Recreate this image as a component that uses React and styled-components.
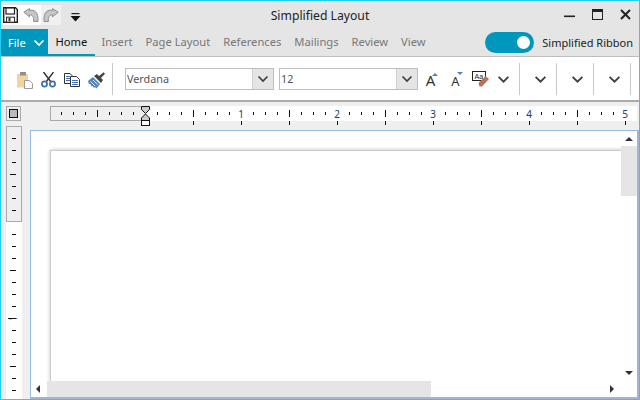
import React from 'react'
import styled, { createGlobalStyle } from 'styled-components'

const GlobalStyle = createGlobalStyle`
html, body {
    margin: 0;
    padding: 0;
    background: #fff;
}
`

const TABS = ['Insert', 'Page Layout', 'References', 'Mailings', 'Review', 'View']
const INCHES = [1, 2, 3, 4, 5]

const range = (n) => Array.from({ length: n }, (_, i) => i)

function Chevron({ size = 12 }) {
    return (
        <svg width={size} height={size} viewBox="0 0 12 12">
            <path d="M1.5 3.5 L6 8 L10.5 3.5" fill="none" stroke="#404040" strokeWidth="1.7" />
        </svg>
    )
}

function SaveIcon() {
    return (
        <svg width="15" height="16" viewBox="0 0 15 16">
            <path d="M.7 .7 H12.5 L14.3 2.5 V15.3 H.7 Z" fill="#fff" stroke="#222" strokeWidth="1.4" />
            <rect x="3" y="1" width="8.5" height="6" fill="#fff" stroke="#222" strokeWidth="1.2" />
            <rect x="3.6" y="10.2" width="8" height="5" fill="#fff" stroke="#222" />
            <rect x="5.5" y="11" width="2" height="3.4" fill="#333" />
        </svg>
    )
}

function UndoIcon({ flip }) {
    return (
        <svg width="16" height="14" viewBox="0 0 16 14" style={flip ? { transform: 'scaleX(-1)' } : undefined}>
            <path d="M.8 4.2 L6.5 .6 V2.4 C11.5 1.4 15.6 4 15 13.4 H10.6 C11 8.8 9.6 6.8 6.5 7 V8.8 Z" fill="#c6c6c6" stroke="#8c8c8c" strokeWidth="1" />
        </svg>
    )
}

function CustomizeIcon() {
    return (
        <svg width="11" height="10" viewBox="0 0 11 10">
            <rect x="1.5" y="0" width="8" height="1.2" fill="#222" />
            <path d="M.5 3 H10.5 L5.5 8.5 Z" fill="#111" />
        </svg>
    )
}

function PasteIcon() {
    return (
        <svg width="16" height="17" viewBox="0 0 16 17">
            <path d="M0 2 H11 V15.5 H0 Z" fill="#f0d59f" />
            <rect x="3" y="0" width="6" height="3.5" fill="#8f8f8f" />
            <path d="M7.5 8.5 H12.5 L15.5 11.5 V16.5 H7.5 Z" fill="#fff" stroke="#9a9a9a" />
        </svg>
    )
}

function ScissorsIcon() {
    return (
        <svg width="15" height="16" viewBox="0 0 15 16">
            <path d="M2.5 0 L10 10 M12.5 0 L5 10" stroke="#333" strokeWidth="1.4" fill="none" />
            <circle cx="3.5" cy="12" r="2.6" fill="none" stroke="#3f72ae" strokeWidth="1.7" />
            <circle cx="11.5" cy="12" r="2.6" fill="none" stroke="#3f72ae" strokeWidth="1.7" />
        </svg>
    )
}

function CopyIcon() {
    return (
        <svg width="16" height="14" viewBox="0 0 16 14">
            <path d="M.5 .5 H6 L8 2.5 V10.5 H.5 Z" fill="#fff" stroke="#333" />
            <path d="M6.5 3.5 H12.5 L15.5 6.5 V13.5 H6.5 Z" fill="#fff" stroke="#333" />
            <path d="M2 3.5 H6 M2 5.5 H6 M2 7.5 H6 M8 7.5 H14 M8 9.5 H14 M8 11.5 H14" stroke="#3f72ae" strokeWidth="1" />
        </svg>
    )
}

function BrushIcon() {
    return (
        <svg width="17" height="17" viewBox="0 0 17 17">
            <path d="M10 5 L15.5 .2 L17 1.8 L12 7 Z" fill="#444" />
            <path d="M6 4 L9 2 L15 8 L13 11 Z" fill="#444" />
            <path d="M5 5 L12 12 L8.5 16.5 L7 15 L6 16 L4.5 14 L3.5 14.5 L2.5 12 L1 12 L0 9 Z" fill="#5785b8" />
            <path d="M2.5 9.5 L7 14 M5 8 L9.5 12.5" stroke="#fff" strokeWidth=".8" />
        </svg>
    )
}

function ClearFormatIcon() {
    return (
        <svg width="17" height="17" viewBox="0 0 17 17">
            <rect x=".5" y="1.5" width="13" height="9" fill="#fff" stroke="#222" />
            <text x="2.5" y="8.5" fontSize="7" fontFamily="Liberation Sans, sans-serif" fill="#222">Aa</text>
            <path d="M6.5 13 L13.5 6 L17 9 L10 16.5 L7.5 16.5 Z" fill="#c0704a" />
        </svg>
    )
}

function FontSizeButton({ size, up, width, caretRight }) {
    return (
        <FontSizeTool $width={width}>
            <BigLetter $size={size}>A</BigLetter>
            <SizeCaret $up={up} $right={caretRight} />
        </FontSizeTool>
    )
}

function RulerMarker() {
    return (
        <svg x="91" y="0" width="9" height="20" viewBox="0 0 9 20" overflow="visible">
            <path d="M.5 .5 H8.5 V3.5 L4.5 7.5 L.5 3.5 Z" fill="#ccc" stroke="#111" />
            <path d="M4.5 8 L8.5 12 V14.5 H.5 V12 Z" fill="#ccc" stroke="#111" />
            <rect x=".5" y="14.5" width="8" height="5" fill="#fff" stroke="#111" />
        </svg>
    )
}

function HorizontalTicks() {
    const origin = 95.5
    return (
        <RulerSvg width="584" height="20">
            {range(48).map((i) => {
                const x = origin - 84 + i * 12
                const step = i - 7
                if (step % 8 === 0) return null
                const half = step % 4 === 0
                return <line key={i} x1={x} x2={x} y1={half ? 4 : 6} y2={half ? 11 : 9} stroke="#111" />
            })}
            {range(10).map((i) => {
                const x = origin + 48 + i * 48
                return <line key={i} x1={x} x2={x} y1="15" y2="19" stroke="#111" />
            })}
            {INCHES.map((n) => (
                <text key={n} x={origin + n * 96 - 0.5} y="11.5" fontSize="10" textAnchor="middle" fontFamily="Noto Sans, sans-serif" fill="#1d3a5f">{n}</text>
            ))}
            <RulerMarker />
        </RulerSvg>
    )
}

function VerticalTicks() {
    return (
        <RulerSvg width="15" height="271">
            {range(22).map((i) => {
                const y = 12.5 + i * 12
                const step = (i + 1) % 8
                if (i === 7 || i === 15) return null
                const long = step === 4
                return <line key={i} x1={long ? 4 : 6} x2="10" y1={y} y2={y} stroke="#111" />
            })}
            <text x="0" y="0" transform="translate(11 192.5) rotate(-90) scale(.6 1)" textAnchor="middle" fontSize="10" fontFamily="Noto Sans, sans-serif" fill="#1d3a5f">1</text>
            <line x1="2" x2="10" y1="192.5" y2="192.5" stroke="#111" />
        </RulerSvg>
    )
}

function App() {
    return (
        <>
            <GlobalStyle />
            <Window>
                <TitleBar>
                    <QuickAccess>
                        <QuickButton $tone="#fff" $width={19}><SaveIcon /></QuickButton>
                        <QuickButton $tone="#fff" $width={21}><UndoIcon /></QuickButton>
                        <QuickButton $tone="#f0f0f0" $width={20}><UndoIcon flip /></QuickButton>
                        <CustomizeButton><CustomizeIcon /></CustomizeButton>
                    </QuickAccess>
                    <Title>Simplified Layout</Title>
                    <WindowControls>
                        <ControlButton>
                            <svg width="12" height="12" viewBox="0 0 12 12"><rect x="0" y="6.5" width="11" height="1.6" fill="#222" /></svg>
                        </ControlButton>
                        <ControlButton>
                            <svg width="12" height="12" viewBox="0 0 12 12"><rect x=".5" y=".5" width="10" height="10" fill="none" stroke="#222" /><rect x="0" y="0" width="11" height="3" fill="#222" /></svg>
                        </ControlButton>
                        <ControlButton>
                            <svg width="12" height="12" viewBox="0 0 12 12"><path d="M1 1 L10 10 M10 1 L1 10" stroke="#222" strokeWidth="2" /></svg>
                        </ControlButton>
                    </WindowControls>
                </TitleBar>

                <TabBar>
                    <FileTab>
                        <span>File</span>
                        <FileChevron viewBox="0 0 12 12"><path d="M1.5 3.5 L6 8 L10.5 3.5" fill="none" stroke="#fff" strokeWidth="1.7" /></FileChevron>
                    </FileTab>
                    <ActiveTab>Home</ActiveTab>
                    {TABS.map((t) => <Tab key={t}>{t}</Tab>)}
                    <RibbonSwitch>
                        <SwitchTrack><SwitchKnob /></SwitchTrack>
                        <SwitchLabel>Simplified Ribbon</SwitchLabel>
                    </RibbonSwitch>
                </TabBar>

                <Ribbon>
                    <ClipboardGroup>
                        <PasteIcon />
                        <ScissorsIcon />
                        <CopyIcon />
                        <BrushIcon />
                    </ClipboardGroup>
                    <Separator />
                    <Combo $width={149}>
                        <ComboValue>Verdana</ComboValue>
                        <ComboButton><Chevron /></ComboButton>
                    </Combo>
                    <Combo $width={139} $gap={5}>
                        <ComboValue>12</ComboValue>
                        <ComboButton><Chevron /></ComboButton>
                    </Combo>
                    <FontSizeButton size={15} up width={26} caretRight={6} />
                    <FontSizeButton size={13} width={24} caretRight={5} />
                    <ToolSlot $width={24}><ClearFormatIcon /></ToolSlot>
                    <ChevronSlot $width={27} $shift={-4}><Chevron size={13} /></ChevronSlot>
                    <Separator />
                    <ChevronSlot $width={36} $shift={4}><Chevron size={13} /></ChevronSlot>
                    <Separator />
                    <ChevronSlot $width={36} $shift={4}><Chevron size={13} /></ChevronSlot>
                    <Separator />
                    <ChevronSlot $width={36} $shift={4}><Chevron size={13} /></ChevronSlot>
                    <Separator />
                </Ribbon>

                <Workspace>
                    <CornerCell>
                        <CornerBox><CornerInner /></CornerBox>
                    </CornerCell>
                    <HorizontalRuler>
                        <RulerMargin />
                        <RulerBody />
                        <HorizontalTicks />
                    </HorizontalRuler>
                    <VerticalRuler>
                        <VerticalMargin />
                        <VerticalBody />
                        <VerticalTicks />
                    </VerticalRuler>
                    <DocumentView>
                        <PageArea>
                            <Page />
                        </PageArea>
                        <VerticalScroll>
                            <ScrollArrow $dir="up" />
                            <VerticalThumb />
                            <ScrollArrow $dir="down" />
                        </VerticalScroll>
                        <HorizontalScroll>
                            <ScrollArrow $dir="left" />
                            <HorizontalThumb />
                            <ScrollArrow $dir="right" />
                        </HorizontalScroll>
                        <ScrollCorner />
                    </DocumentView>
                </Workspace>
            </Window>
        </>
    )
}

const Window = styled.div`
display: flex;
flex-direction: column;
box-sizing: border-box;
width: 640px;
height: 400px;
overflow: hidden;
border: 1px solid #1fd0f5;
background: #fff;
font-family: 'Noto Sans', 'Open Sans', sans-serif;
font-size: 12px;
color: #222;
`

const TitleBar = styled.div`
display: grid;
grid-template-columns: 1fr auto 1fr;
align-items: center;
height: 28px;
flex: none;
background: #e5e5e5;
`

const QuickAccess = styled.div`
display: flex;
align-items: center;
height: 20px;
`

const QuickButton = styled.div`
display: flex;
align-items: center;
justify-content: center;
width: ${props => props.$width}px;
height: 20px;
background: ${props => props.$tone};
`

const CustomizeButton = styled.div`
display: flex;
align-items: center;
margin-left: 9px;
padding-top: 6px;
`

const Title = styled.div`
font-size: 12.2px;
color: #222;
`

const WindowControls = styled.div`
display: flex;
justify-content: flex-end;
gap: 16px;
padding-right: 7px;
`

const ControlButton = styled.div`
display: flex;
width: 12px;
height: 12px;
`

const TabBar = styled.div`
display: flex;
align-items: stretch;
height: 27px;
flex: none;
background: #e5e5e5;
border-bottom: 1px solid #bdbdbd;
`

const FileTab = styled.div`
display: flex;
align-items: center;
justify-content: space-between;
box-sizing: border-box;
width: 47px;
padding: 0 3px 0 7px;
background: #0097bd;
color: #fff;
font-size: 11px;
`

const FileChevron = styled.svg`
width: 12px;
height: 12px;
`

const Tab = styled.div`
display: flex;
align-items: center;
box-sizing: border-box;
padding: 0 6.5px;
height: 27px;
color: #777;
border-bottom: 2px solid transparent;
font-size: 11.2px;
`

const ActiveTab = styled(Tab)`
width: 47px;
padding: 0 0 0 7.5px;
color: #111;
border-bottom-color: #0097bd;
`

const RibbonSwitch = styled.div`
display: flex;
align-items: center;
gap: 8px;
margin-left: auto;
padding-right: 6px;
`

const SwitchTrack = styled.div`
display: flex;
align-items: center;
justify-content: flex-end;
box-sizing: border-box;
width: 49px;
height: 21px;
padding-right: 4px;
border-radius: 11px;
background: #0097bd;
`

const SwitchKnob = styled.div`
width: 13px;
height: 13px;
border-radius: 50%;
background: #fff;
`

const SwitchLabel = styled.span`
font-size: 11px;
color: #222;
`

const Ribbon = styled.div`
display: flex;
align-items: center;
box-sizing: border-box;
height: 45px;
flex: none;
padding-left: 16px;
background: #fff;
border-bottom: 2px solid #ababab;
`

const ClipboardGroup = styled.div`
display: flex;
align-items: center;
gap: 8px;
width: 95px;
padding-top: 3px;
`

const Separator = styled.div`
width: 1px;
height: 32px;
flex: none;
background: #c8c8c8;
`

const Combo = styled.div`
display: flex;
align-items: stretch;
box-sizing: border-box;
width: ${props => props.$width}px;
height: 22px;
margin-left: ${props => props.$gap ?? 12}px;
border: 1px solid #bdbdbd;
`

const ComboValue = styled.div`
flex: 1;
display: flex;
align-items: center;
padding-left: 1px;
font-size: 10.8px;
color: #555;
`

const ComboButton = styled.div`
display: flex;
align-items: center;
justify-content: center;
width: 20px;
background: #e5e5e5;
border-left: 1px solid #d0d0d0;
`

const FontSizeTool = styled.div`
position: relative;
display: flex;
align-items: flex-end;
justify-content: center;
box-sizing: border-box;
width: ${props => props.$width}px;
height: 22px;
padding-bottom: 2px;
padding-right: 1px;
`

const BigLetter = styled.span`
font-family: 'Noto Sans', sans-serif;
font-size: ${props => props.$size}px;
line-height: 1;
color: #333;
`

const SizeCaret = styled.i`
position: absolute;
top: ${props => props.$up ? 5 : 4}px;
right: ${props => props.$right}px;
width: 0;
height: 0;
border-left: 3px solid transparent;
border-right: 3px solid transparent;
${props => props.$up
    ? 'border-bottom: 3px solid #4f81bd;'
    : 'border-top: 3px solid #4f81bd;'}
`

const ToolSlot = styled.div`
display: flex;
align-items: center;
justify-content: center;
box-sizing: border-box;
width: ${props => props.$width}px;
`

const ChevronSlot = styled(ToolSlot)`
padding-top: 1px;
padding-left: ${props => props.$shift > 0 ? props.$shift : 0}px;
padding-right: ${props => props.$shift < 0 ? -props.$shift : 0}px;
`

const Workspace = styled.div`
flex: 1;
min-height: 0;
display: grid;
grid-template-columns: 29px 1fr;
grid-template-rows: 28px 1fr;
background: #efefef;
`

const CornerCell = styled.div`
padding: 4px 0 0 5px;
`

const CornerBox = styled.div`
display: flex;
align-items: center;
justify-content: center;
box-sizing: border-box;
width: 15px;
height: 15px;
border: 1px solid #aaa;
`

const CornerInner = styled.div`
box-sizing: border-box;
width: 9px;
height: 9px;
border: 1px solid #111;
background: #bbb;
`

const HorizontalRuler = styled.div`
position: relative;
display: flex;
align-items: flex-start;
margin: 4px 2px 0 20px;
`

const RulerMargin = styled.div`
box-sizing: border-box;
width: 95px;
height: 15px;
border: 1px solid #aaa;
border-right: none;
background: #efefef;
`

const RulerBody = styled.div`
flex: 1;
height: 15px;
background: #fff;
`

const RulerSvg = styled.svg`
position: absolute;
top: 0;
left: 0;
`

const VerticalRuler = styled.div`
position: relative;
display: flex;
flex-direction: column;
margin: -4px 8px 0 5px;
`

const VerticalMargin = styled.div`
box-sizing: border-box;
height: 96px;
border: 1px solid #aaa;
background: #efefef;
`

const VerticalBody = styled.div`
flex: 1;
background: #fff;
`

const DocumentView = styled.div`
display: grid;
grid-template-columns: 1fr 16px;
grid-template-rows: 1fr 16px;
box-sizing: border-box;
min-height: 0;
border-style: solid;
border-width: 1px 2px 2px 1px;
border-color: #94bbe8 #a5b4d0 #a5b4d0 #94bbe8;
background: #fff;
`

const PageArea = styled.div`
overflow: hidden;
padding: 19px 0 0 19px;
min-height: 0;
`

const Page = styled.div`
height: 100%;
box-sizing: border-box;
margin-right: -6px;
margin-bottom: -6px;
border-top: 1px solid #ccc;
border-left: 1px solid #ccc;
background: #fff;
box-shadow: 0 0 4px #c0c0c0;
`

const VerticalScroll = styled.div`
display: flex;
flex-direction: column;
align-items: stretch;
`

const HorizontalScroll = styled.div`
display: flex;
align-items: stretch;
`

const VerticalThumb = styled.div`
height: 50px;
background: #e5e5e5;
margin-bottom: auto;
`

const HorizontalThumb = styled.div`
width: 384px;
background: #e5e5e5;
margin-right: auto;
`

const ScrollCorner = styled.div`
background: #fff;
`

const ScrollArrow = styled.div`
position: relative;
flex: none;
width: ${props => (props.$dir === 'left' || props.$dir === 'right') ? '16px' : 'auto'};
height: ${props => props.$dir === 'up' ? '15px' : props.$dir === 'down' ? '17px' : 'auto'};
&::after {
    content: '';
    position: absolute;
    top: 50%;
    left: calc(50% - ${props => (props.$dir === 'left' || props.$dir === 'right') ? 1 : 0}px);
    transform: translate(-50%, -50%);
    width: 0;
    height: 0;
    ${props => props.$dir === 'up' && 'border-left: 4px solid transparent; border-right: 4px solid transparent; border-bottom: 4px solid #333;'}
    ${props => props.$dir === 'down' && 'border-left: 4px solid transparent; border-right: 4px solid transparent; border-top: 4px solid #333;'}
    ${props => props.$dir === 'left' && 'border-top: 4px solid transparent; border-bottom: 4px solid transparent; border-right: 4px solid #333;'}
    ${props => props.$dir === 'right' && 'border-top: 4px solid transparent; border-bottom: 4px solid transparent; border-left: 4px solid #333;'}
}
`

export default App
